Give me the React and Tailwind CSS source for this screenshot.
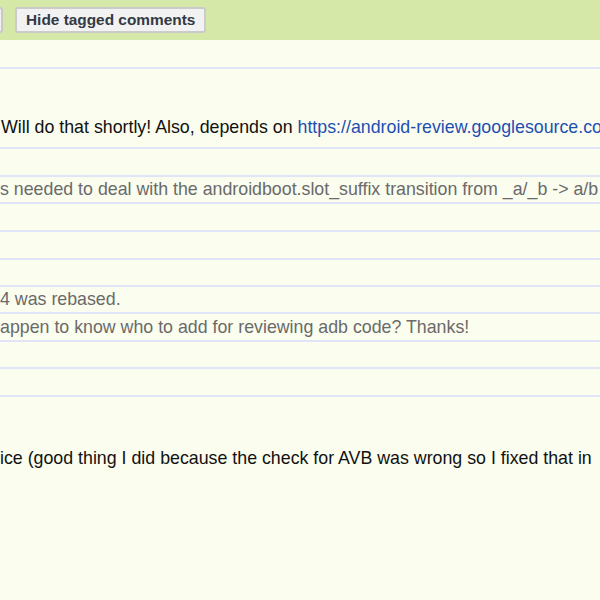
export default function App() {
  const font = { fontFamily: '"Liberation Sans", Arial, Helvetica, sans-serif' };
  const line = "border-b-2 border-[#dfe5f6]";
  return (
    <div className="w-[600px] h-[600px] overflow-hidden bg-[#fbfdef]" style={font}>
      <div className="h-[40px] bg-[#d5e8a8] flex items-center gap-[12px] pl-0 overflow-hidden">
        <div className="ml-[-40px] w-[43px] h-[26px] shrink-0 bg-[#f0f0f0] border-2 border-[#c9c9c9] rounded-[3px]"></div>
        <button className="h-[26px] px-[9px] bg-[#f2f2f2] border-2 border-[#cbcbcb] rounded-[3px] text-[15.4px] font-bold text-[#333a44] leading-none">
          Hide tagged comments
        </button>
      </div>
      <div className={`h-[29px] ${line}`}></div>
      <div className={`h-[80px] ${line} flex items-end pb-[6px] pl-[1px] whitespace-nowrap overflow-hidden text-[17.8px] text-[#111]`}>
        <span>
          Will do that shortly! Also, depends on{" "}
          <span className="text-[#1d4fb3]">https://android-review.googlesource.com/#/c/</span>
        </span>
      </div>
      <div className={`h-[28px] ${line}`}></div>
      <div className={`h-[27px] ${line} flex items-center whitespace-nowrap overflow-hidden text-[17.8px] text-[#6a6a6a]`}>
        s needed to deal with the androidboot.slot_suffix transition from _a/_b -&gt; a/b
      </div>
      <div className={`h-[28px] ${line}`}></div>
      <div className={`h-[28px] ${line}`}></div>
      <div className={`h-[27px] ${line}`}></div>
      <div className={`h-[27px] ${line} flex items-center whitespace-nowrap text-[17.8px] text-[#6a6a6a]`}>
        4 was rebased.
      </div>
      <div className={`h-[28px] ${line} flex items-center whitespace-nowrap text-[17.8px] text-[#6a6a6a]`}>
        appen to know who to add for reviewing adb code? Thanks!
      </div>
      <div className={`h-[27px] ${line}`}></div>
      <div className={`h-[28px] ${line}`}></div>
      <div className="pt-[48px] whitespace-nowrap text-[17.8px] text-[#111]">
        ice (good thing I did because the check for AVB was wrong so I fixed that in
      </div>
    </div>
  );
}
